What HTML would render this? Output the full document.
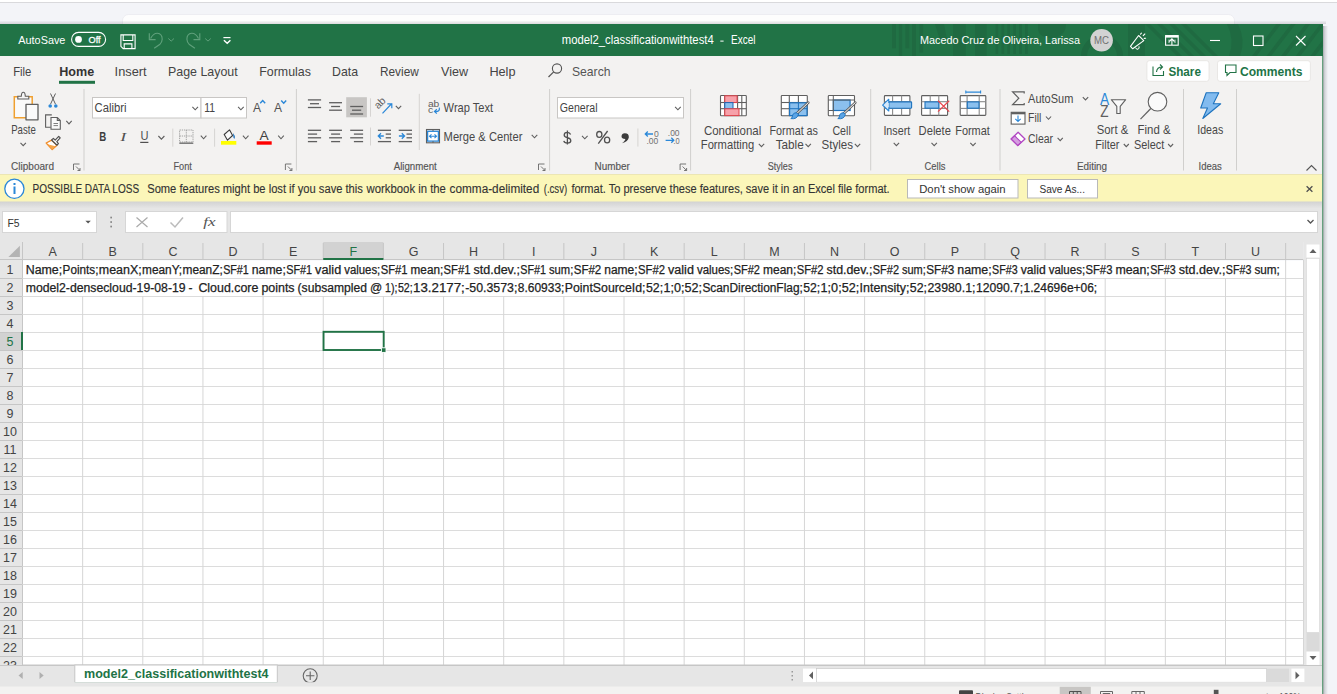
<!DOCTYPE html>
<html><head><meta charset="utf-8"><style>
html,body{margin:0;padding:0;background:#f3f4f8;overflow:hidden}
svg{display:block;font-family:"Liberation Sans", sans-serif}
</style></head><body>
<svg width="1337" height="694" viewBox="0 0 1337 694">
<rect x="0" y="0" width="1337" height="694" fill="#f3f4f8" />
<rect x="0" y="0" width="1337" height="2" fill="#ffffff" />
<rect x="0" y="2" width="1337" height="1" fill="#d9d9dc" />
<rect x="122.5" y="14.5" width="1112" height="20" fill="#fdfdfd" stroke="#e8e8ee" stroke-width="0.7" rx="6" />
<defs><linearGradient id="rsh" x1="0" y1="0" x2="1" y2="0"><stop offset="0" stop-color="#a9abaf"/><stop offset="0.35" stop-color="#d2d3d8"/><stop offset="1" stop-color="#f3f4f8"/></linearGradient></defs>
<rect x="1323" y="26" width="5" height="668" fill="url(#rsh)" />
<defs><linearGradient id="tsh" x1="0" y1="0" x2="0" y2="1"><stop offset="0" stop-color="#000" stop-opacity="0"/><stop offset="1" stop-color="#3a2a40" stop-opacity="0.16"/></linearGradient></defs>
<rect x="0" y="20.5" width="1326" height="3.5" fill="url(#tsh)" />
<rect x="0" y="24" width="1323" height="32" fill="#217346" />
<defs><clipPath id="tb"><rect x="0" y="24" width="1322.5" height="32"/></clipPath></defs>
<g clip-path="url(#tb)" fill="#1f6a41">
<rect x="892" y="24" width="3.9" height="24.299999999999997" fill="#1f6a41" />
<rect x="898.9" y="24" width="3.3" height="32" fill="#1f6a41" />
<rect x="905.4" y="24" width="3.9" height="24.299999999999997" fill="#1f6a41" />
<rect x="912" y="24" width="4" height="32" fill="#1f6a41" />
<rect x="919.5" y="24" width="3.6" height="28.5" fill="#1f6a41" />
<path d="M935 24 H944 L947 40 H940 Z" fill="#1f6a41" />
<rect x="953" y="24" width="12.7" height="32" fill="#1f6a41" />
<rect x="975" y="24" width="11.6" height="32" fill="#1f6a41" />
<rect x="995.6" y="24" width="2.6" height="30" fill="#1f6a41" />
<rect x="1001.5" y="24" width="2.6" height="30" fill="#1f6a41" />
<rect x="1007.4" y="24" width="2.6" height="30" fill="#1f6a41" />
<rect x="1013.3000000000001" y="24" width="2.6" height="30" fill="#1f6a41" />
<rect x="1019.2" y="24" width="2.6" height="30" fill="#1f6a41" />
<rect x="1025.1" y="24" width="2.6" height="30" fill="#1f6a41" />
<path d="M1038 24 H1066 Q1066 36 1052 38 Q1040 38 1038 30 Z" fill="#1f6a41" />
<circle cx="1102" cy="56" r="18" fill="none" stroke="#1f6a41" stroke-width="6"/>
<rect x="1128" y="24" width="17" height="32" fill="#1f6a41" />
<path d="M1145 24 L1150 24 L1182 56 L1177 56 Z" fill="#1f6a41" />
<path d="M1157 24 L1162 24 L1194 56 L1189 56 Z" fill="#1f6a41" />
<path d="M1169 24 L1174 24 L1206 56 L1201 56 Z" fill="#1f6a41" />
<path d="M1181 24 L1186 24 L1218 56 L1213 56 Z" fill="#1f6a41" />
<path d="M1227 24 H1238 Q1246 40 1240 56 H1229 Q1235 40 1227 24 Z" fill="#1f6a41" />
<path d="M1252.0 56 L1276.5 24 L1281.0 24 L1256.5 56 Z" fill="#1f6a41" />
<path d="M1266.6 56 L1291.1 24 L1295.6 24 L1271.1 56 Z" fill="#1f6a41" />
<path d="M1281.2 56 L1305.7 24 L1310.2 24 L1285.7 56 Z" fill="#1f6a41" />
<path d="M1295.8 56 L1320.3 24 L1324.8 24 L1300.3 56 Z" fill="#1f6a41" />
<path d="M1310.4 56 L1334.9 24 L1339.4 24 L1314.9 56 Z" fill="#1f6a41" />
<path d="M1325.0 56 L1349.5 24 L1354.0 24 L1329.5 56 Z" fill="#1f6a41" />
</g>
<rect x="0" y="56" width="1323" height="118" fill="#f3f2f1" />
<rect x="1322" y="56" width="1.2" height="638" fill="#66a07e" />
<text x="18.3" y="44.3" font-size="11.5" fill="#ffffff" font-weight="normal" text-anchor="start" textLength="47.1" lengthAdjust="spacingAndGlyphs" >AutoSave</text>
<rect x="71.6" y="32.4" width="34" height="14" fill="none" stroke="#ffffff" stroke-width="1.1" rx="7" />
<circle cx="78.5" cy="39.4" r="3.4" fill="#ffffff"/>
<text x="88.5" y="43.1" font-size="9.8" fill="#ffffff" font-weight="normal" text-anchor="start" textLength="12.1" lengthAdjust="spacingAndGlyphs" stroke="#ffffff" stroke-width="0.3">Off</text>
<path d="M120.9 34.9 H135.1 V48.6 H123.2 L120.9 46.3 Z M123.2 34.9 V40.5 H132.8 V34.9 M124.2 48.6 V43.9 H131.9 V48.6" fill="none" stroke="#ffffff" stroke-width="1.1" />
<path d="M150.6 38.6 Q153.2 33.2 157.4 33.3 Q162.2 33.8 162.2 39.2 Q162 42.2 160 44.2 L154.2 48.2" fill="none" stroke="#5fa07b" stroke-width="1.15" />
<path d="M149.3 33.3 V39.6 H155.6" fill="none" stroke="#5fa07b" stroke-width="1.15" />
<path d="M168.3 38.5 L171.2 41.1 L174 38.5" fill="none" stroke="#5fa07b" stroke-width="1" />
<path d="M198.5 38.6 Q195.9 33.2 191.7 33.3 Q186.9 33.8 186.9 39.2 Q187.1 42.2 189.1 44.2 L194.9 48.2" fill="none" stroke="#5fa07b" stroke-width="1.15" />
<path d="M199.8 33.3 V39.6 H193.5" fill="none" stroke="#5fa07b" stroke-width="1.15" />
<path d="M205.2 38.5 L208 41.1 L210.8 38.5" fill="none" stroke="#5fa07b" stroke-width="1" />
<path d="M223.4 37.6 H230.5" fill="none" stroke="#ffffff" stroke-width="1.2" />
<path d="M223.9 40.2 L227.2 43.2 L230.4 40.2" fill="none" stroke="#ffffff" stroke-width="1.5" />
<text x="561.8" y="44.3" font-size="12" fill="#ffffff" font-weight="normal" text-anchor="start" textLength="151.9" lengthAdjust="spacingAndGlyphs" >model2_classificationwithtest4</text>
<rect x="720.3" y="40.6" width="3.3" height="1" fill="#ffffff" />
<text x="731.0" y="44.3" font-size="12" fill="#ffffff" font-weight="normal" text-anchor="start" textLength="24.4" lengthAdjust="spacingAndGlyphs" >Excel</text>
<text x="920.0" y="44.3" font-size="11.5" fill="#ffffff" font-weight="normal" text-anchor="start" textLength="160.0" lengthAdjust="spacingAndGlyphs" >Macedo Cruz de Oliveira, Larissa</text>
<circle cx="1101.6" cy="40.2" r="11.3" fill="#d3d3d3"/>
<text x="1101.6" y="44.0" font-size="10" fill="#707070" font-weight="normal" text-anchor="middle" textLength="15.0" lengthAdjust="spacingAndGlyphs" >MC</text>
<path d="M1130.5 46.3 L1138.6 35.5 L1143.8 40.6 L1132.7 48.8 Z" fill="none" stroke="#ffffff" stroke-width="1.1" stroke-linejoin="round"/>
<path d="M1135.6 47.6 Q1136.2 49.8 1138.2 49.2 Q1139.6 48.3 1139 46.3" fill="none" stroke="#ffffff" stroke-width="1" />
<path d="M1140.6 34.2 L1141.4 33.2 M1143.2 35.6 L1144.8 34 M1144.2 38.4 L1145.6 38.2" fill="none" stroke="#ffffff" stroke-width="1.1" stroke-linecap="round"/>
<rect x="1165.6" y="35.6" width="12.6" height="9.6" fill="none" stroke="#ffffff" stroke-width="1.1" />
<rect x="1165.6" y="35.6" width="12.6" height="2" fill="#ffffff" />
<path d="M1169 43 V39.5 M1175 43 V39.5" fill="none" stroke="#ffffff" stroke-width="0.8" />
<path d="M1169.3 41.5 L1171.9 38.8 L1174.5 41.5 M1171.9 39 V45" fill="none" stroke="#ffffff" stroke-width="1.1" />
<line x1="1210" y1="40.5" x2="1220" y2="40.5" stroke="#ffffff" stroke-width="1.1" />
<rect x="1253.5" y="36" width="9.5" height="9.5" fill="none" stroke="#ffffff" stroke-width="1.1" />
<path d="M1296 36 L1305.5 45.5 M1305.5 36 L1296 45.5" fill="none" stroke="#ffffff" stroke-width="1.1" />
<text x="13.2" y="76.0" font-size="12.8" fill="#444444" font-weight="normal" text-anchor="start" textLength="18.2" lengthAdjust="spacingAndGlyphs" >File</text>
<text x="59.3" y="76.0" font-size="12.8" fill="#333333" font-weight="bold" text-anchor="start" textLength="34.9" lengthAdjust="spacingAndGlyphs" >Home</text>
<text x="114.6" y="76.0" font-size="12.8" fill="#444444" font-weight="normal" text-anchor="start" textLength="32.0" lengthAdjust="spacingAndGlyphs" >Insert</text>
<text x="168.0" y="76.0" font-size="12.8" fill="#444444" font-weight="normal" text-anchor="start" textLength="69.7" lengthAdjust="spacingAndGlyphs" >Page Layout</text>
<text x="259.3" y="76.0" font-size="12.8" fill="#444444" font-weight="normal" text-anchor="start" textLength="51.6" lengthAdjust="spacingAndGlyphs" >Formulas</text>
<text x="332.0" y="76.0" font-size="12.8" fill="#444444" font-weight="normal" text-anchor="start" textLength="26.0" lengthAdjust="spacingAndGlyphs" >Data</text>
<text x="380.0" y="76.0" font-size="12.8" fill="#444444" font-weight="normal" text-anchor="start" textLength="38.8" lengthAdjust="spacingAndGlyphs" >Review</text>
<text x="441.0" y="76.0" font-size="12.8" fill="#444444" font-weight="normal" text-anchor="start" textLength="27.0" lengthAdjust="spacingAndGlyphs" >View</text>
<text x="489.4" y="76.0" font-size="12.8" fill="#444444" font-weight="normal" text-anchor="start" textLength="26.1" lengthAdjust="spacingAndGlyphs" >Help</text>
<rect x="59" y="80.8" width="36" height="3" fill="#217346" />
<circle cx="557" cy="68.5" r="4.6" fill="none" stroke="#555" stroke-width="1.1"/>
<line x1="553.7" y1="71.8" x2="548.5" y2="77" stroke="#555" stroke-width="1.2" />
<text x="572.0" y="76.0" font-size="12.8" fill="#555555" font-weight="normal" text-anchor="start" textLength="38.5" lengthAdjust="spacingAndGlyphs" >Search</text>
<rect x="1146.9" y="60.7" width="62.1" height="20.6" fill="#ffffff" stroke="#e4e2e0" stroke-width="0.8" rx="2.5" />
<rect x="1217.5" y="60.7" width="92.9" height="20.6" fill="#ffffff" stroke="#e4e2e0" stroke-width="0.8" rx="2.5" />
<path d="M1153 66.5 V75.5 H1163.5 V71 M1156.5 72 Q1157 67 1162 67 M1160 64.5 L1162.5 67 L1160 69.5" fill="none" stroke="#217346" stroke-width="1.1" />
<text x="1168.4" y="75.7" font-size="12.8" fill="#217346" font-weight="bold" text-anchor="start" textLength="32.5" lengthAdjust="spacingAndGlyphs" >Share</text>
<path d="M1225.5 65 H1236 V72.5 H1230 L1227 75.5 V72.5 H1225.5 Z" fill="none" stroke="#217346" stroke-width="1.1" />
<text x="1240.0" y="75.7" font-size="12.8" fill="#217346" font-weight="bold" text-anchor="start" textLength="62.5" lengthAdjust="spacingAndGlyphs" >Comments</text>
<line x1="84" y1="89" x2="84" y2="170.5" stroke="#d0cfcd" stroke-width="1" />
<line x1="296.4" y1="89" x2="296.4" y2="170.5" stroke="#d0cfcd" stroke-width="1" />
<line x1="549.6" y1="89" x2="549.6" y2="170.5" stroke="#d0cfcd" stroke-width="1" />
<line x1="690.6" y1="89" x2="690.6" y2="170.5" stroke="#d0cfcd" stroke-width="1" />
<line x1="870.7" y1="89" x2="870.7" y2="170.5" stroke="#d0cfcd" stroke-width="1" />
<line x1="1000" y1="89" x2="1000" y2="170.5" stroke="#d0cfcd" stroke-width="1" />
<line x1="1183.5" y1="89" x2="1183.5" y2="170.5" stroke="#d0cfcd" stroke-width="1" />
<line x1="1236.5" y1="89" x2="1236.5" y2="170.5" stroke="#d0cfcd" stroke-width="1" />
<text x="11.0" y="170.3" font-size="10" fill="#555555" font-weight="normal" text-anchor="start" textLength="43.0" lengthAdjust="spacingAndGlyphs" stroke="#555555" stroke-width="0.15">Clipboard</text>
<text x="173.5" y="170.3" font-size="10" fill="#555555" font-weight="normal" text-anchor="start" textLength="18.4" lengthAdjust="spacingAndGlyphs" stroke="#555555" stroke-width="0.15">Font</text>
<text x="393.7" y="170.3" font-size="10" fill="#555555" font-weight="normal" text-anchor="start" textLength="43.1" lengthAdjust="spacingAndGlyphs" stroke="#555555" stroke-width="0.15">Alignment</text>
<text x="594.5" y="170.3" font-size="10" fill="#555555" font-weight="normal" text-anchor="start" textLength="35.2" lengthAdjust="spacingAndGlyphs" stroke="#555555" stroke-width="0.15">Number</text>
<text x="767.8" y="170.3" font-size="10" fill="#555555" font-weight="normal" text-anchor="start" textLength="24.6" lengthAdjust="spacingAndGlyphs" stroke="#555555" stroke-width="0.15">Styles</text>
<text x="924.6" y="170.3" font-size="10" fill="#555555" font-weight="normal" text-anchor="start" textLength="20.8" lengthAdjust="spacingAndGlyphs" stroke="#555555" stroke-width="0.15">Cells</text>
<text x="1076.9" y="170.3" font-size="10" fill="#555555" font-weight="normal" text-anchor="start" textLength="30.2" lengthAdjust="spacingAndGlyphs" stroke="#555555" stroke-width="0.15">Editing</text>
<text x="1198.6" y="170.3" font-size="10" fill="#555555" font-weight="normal" text-anchor="start" textLength="23.2" lengthAdjust="spacingAndGlyphs" stroke="#555555" stroke-width="0.15">Ideas</text>
<path d="M73.5 170 V164 H79.5 M76 166.5 L80 170.5 M77.5 170.5 H80 V168" fill="none" stroke="#666" stroke-width="0.9" />
<path d="M285.4 170 V164 H291.4 M287.9 166.5 L291.9 170.5 M289.4 170.5 H291.9 V168" fill="none" stroke="#666" stroke-width="0.9" />
<path d="M538.5 170 V164 H544.5 M541 166.5 L545 170.5 M542.5 170.5 H545 V168" fill="none" stroke="#666" stroke-width="0.9" />
<path d="M680.1 170 V164 H686.1 M682.6 166.5 L686.6 170.5 M684.1 170.5 H686.6 V168" fill="none" stroke="#666" stroke-width="0.9" />
<path d="M1306.5 170.5 L1311.5 165.5 L1316.5 170.5" fill="none" stroke="#555" stroke-width="1.1" />
<rect x="0" y="174" width="1322" height="28" fill="#fbf6b9" />
<rect x="0" y="174" width="1322" height="0.8" fill="#e9e3b3" />
<circle cx="14.4" cy="188.8" r="9.6" fill="#ffffff" stroke="#2b88d8" stroke-width="1.3"/>
<rect x="13.5" y="186.5" width="2" height="7.5" fill="#2b88d8" />
<rect x="13.5" y="183" width="2" height="2" fill="#2b88d8" />
<text x="32.5" y="193.0" font-size="12" fill="#333333" font-weight="normal" text-anchor="start" textLength="106.6" lengthAdjust="spacingAndGlyphs" stroke="#333333" stroke-width="0.15">POSSIBLE DATA LOSS</text>
<text x="147.2" y="193.2" font-size="12" fill="#333333" font-weight="normal" text-anchor="start" textLength="215.7" lengthAdjust="spacingAndGlyphs" stroke="#333333" stroke-width="0.12">Some features might be lost if you save this</text>
<text x="366.6" y="193.2" font-size="12" fill="#333333" font-weight="normal" text-anchor="start" textLength="79.3" lengthAdjust="spacingAndGlyphs" stroke="#333333" stroke-width="0.12">workbook in the</text>
<text x="449.6" y="193.2" font-size="12" fill="#333333" font-weight="normal" text-anchor="start" textLength="89.6" lengthAdjust="spacingAndGlyphs" stroke="#333333" stroke-width="0.12">comma-delimited</text>
<text x="543.7" y="193.2" font-size="12" fill="#333333" font-weight="normal" text-anchor="start" textLength="23.5" lengthAdjust="spacingAndGlyphs" stroke="#333333" stroke-width="0.12">(.csv)</text>
<text x="571.4" y="193.2" font-size="12" fill="#333333" font-weight="normal" text-anchor="start" textLength="318.3" lengthAdjust="spacingAndGlyphs" stroke="#333333" stroke-width="0.12">format. To preserve these features, save it in an Excel file format.</text>
<rect x="907.5" y="179.5" width="110.5" height="18.5" fill="#ffffff" stroke="#b9b9b9" stroke-width="1" />
<text x="919.2" y="193.0" font-size="11.5" fill="#333333" font-weight="normal" text-anchor="start" textLength="86.4" lengthAdjust="spacingAndGlyphs" >Don't show again</text>
<rect x="1027.5" y="179.5" width="70" height="18.5" fill="#ffffff" stroke="#b9b9b9" stroke-width="1" />
<text x="1039.4" y="193.0" font-size="11.5" fill="#333333" font-weight="normal" text-anchor="start" textLength="45.6" lengthAdjust="spacingAndGlyphs" >Save As...</text>
<path d="M1306.6 186.2 L1312.4 191.8 M1312.4 186.2 L1306.6 191.8" fill="none" stroke="#505050" stroke-width="1.3" />
<rect x="0" y="202" width="1322" height="40" fill="#e6e6e6" />
<defs><linearGradient id="shd" x1="0" y1="0" x2="0" y2="1"><stop offset="0" stop-color="#d2d2d2"/><stop offset="1" stop-color="#e6e6e6"/></linearGradient></defs>
<rect x="0" y="201.5" width="1322" height="7" fill="url(#shd)" />
<rect x="2.5" y="211.5" width="94" height="21" fill="#ffffff" stroke="#d6d6d6" stroke-width="1" />
<text x="7.4" y="226.5" font-size="11.5" fill="#333333" font-weight="normal" text-anchor="start" textLength="12.1" lengthAdjust="spacingAndGlyphs" >F5</text>
<path d="M85.4 220.7 H90.8 L88.1 223.5 Z" fill="#555" />
<rect x="110.3" y="216.7" width="1.7" height="1.7" fill="#888" />
<rect x="110.3" y="221.2" width="1.7" height="1.7" fill="#888" />
<rect x="110.3" y="225.7" width="1.7" height="1.7" fill="#888" />
<rect x="125.5" y="211.5" width="101.5" height="21" fill="#ffffff" stroke="#d6d6d6" stroke-width="1" />
<path d="M136.5 217.5 L147.5 227 M147.5 217.5 L136.5 227" fill="none" stroke="#aaaaaa" stroke-width="1.2" />
<path d="M170.5 222.5 L175 227 L183 217.5" fill="none" stroke="#bbbbbb" stroke-width="1.5" />
<text x="203.3" y="226.3" font-size="13.5" fill="#555555" font-weight="normal" text-anchor="start" textLength="12.3" lengthAdjust="spacingAndGlyphs" font-family="Liberation Serif" font-style="italic">fx</text>
<rect x="230.5" y="211.5" width="1087" height="21" fill="#ffffff" stroke="#d6d6d6" stroke-width="1" />
<path d="M1307.5 220 L1310.5 223 L1313.5 220" fill="none" stroke="#555" stroke-width="1.3" />
<rect x="0" y="242" width="1303.5" height="18" fill="#e6e6e6" />
<rect x="0" y="260" width="22.5" height="405" fill="#e6e6e6" />
<rect x="23.0" y="260.5" width="1280.5" height="404.5" fill="#ffffff" />
<rect x="323.25" y="242" width="60.15" height="18" fill="#d2d2d2" />
<rect x="0" y="332" width="22.5" height="18" fill="#d2d2d2" />
<path d="M8.4 257 H19.9 V245.7 Z" fill="#b4b4b4" />
<line x1="22.5" y1="243" x2="22.5" y2="260" stroke="#c6c6c6" stroke-width="1" />
<line x1="82.65" y1="243" x2="82.65" y2="260" stroke="#c6c6c6" stroke-width="1" />
<line x1="142.8" y1="243" x2="142.8" y2="260" stroke="#c6c6c6" stroke-width="1" />
<line x1="202.95" y1="243" x2="202.95" y2="260" stroke="#c6c6c6" stroke-width="1" />
<line x1="263.1" y1="243" x2="263.1" y2="260" stroke="#c6c6c6" stroke-width="1" />
<line x1="323.25" y1="243" x2="323.25" y2="260" stroke="#c6c6c6" stroke-width="1" />
<line x1="383.4" y1="243" x2="383.4" y2="260" stroke="#c6c6c6" stroke-width="1" />
<line x1="443.55" y1="243" x2="443.55" y2="260" stroke="#c6c6c6" stroke-width="1" />
<line x1="503.7" y1="243" x2="503.7" y2="260" stroke="#c6c6c6" stroke-width="1" />
<line x1="563.85" y1="243" x2="563.85" y2="260" stroke="#c6c6c6" stroke-width="1" />
<line x1="624.0" y1="243" x2="624.0" y2="260" stroke="#c6c6c6" stroke-width="1" />
<line x1="684.15" y1="243" x2="684.15" y2="260" stroke="#c6c6c6" stroke-width="1" />
<line x1="744.3" y1="243" x2="744.3" y2="260" stroke="#c6c6c6" stroke-width="1" />
<line x1="804.4499999999999" y1="243" x2="804.4499999999999" y2="260" stroke="#c6c6c6" stroke-width="1" />
<line x1="864.6" y1="243" x2="864.6" y2="260" stroke="#c6c6c6" stroke-width="1" />
<line x1="924.75" y1="243" x2="924.75" y2="260" stroke="#c6c6c6" stroke-width="1" />
<line x1="984.9" y1="243" x2="984.9" y2="260" stroke="#c6c6c6" stroke-width="1" />
<line x1="1045.05" y1="243" x2="1045.05" y2="260" stroke="#c6c6c6" stroke-width="1" />
<line x1="1105.2" y1="243" x2="1105.2" y2="260" stroke="#c6c6c6" stroke-width="1" />
<line x1="1165.35" y1="243" x2="1165.35" y2="260" stroke="#c6c6c6" stroke-width="1" />
<line x1="1225.5" y1="243" x2="1225.5" y2="260" stroke="#c6c6c6" stroke-width="1" />
<line x1="1285.6499999999999" y1="243" x2="1285.6499999999999" y2="260" stroke="#c6c6c6" stroke-width="1" />
<line x1="0" y1="259.5" x2="1303.5" y2="259.5" stroke="#c6c6c6" stroke-width="1" />
<line x1="22.5" y1="242" x2="22.5" y2="665" stroke="#c6c6c6" stroke-width="1" />
<line x1="0" y1="278.5" x2="22.5" y2="278.5" stroke="#c6c6c6" stroke-width="1" />
<line x1="0" y1="296.5" x2="22.5" y2="296.5" stroke="#c6c6c6" stroke-width="1" />
<line x1="0" y1="314.5" x2="22.5" y2="314.5" stroke="#c6c6c6" stroke-width="1" />
<line x1="0" y1="332.5" x2="22.5" y2="332.5" stroke="#c6c6c6" stroke-width="1" />
<line x1="0" y1="350.5" x2="22.5" y2="350.5" stroke="#c6c6c6" stroke-width="1" />
<line x1="0" y1="368.5" x2="22.5" y2="368.5" stroke="#c6c6c6" stroke-width="1" />
<line x1="0" y1="386.5" x2="22.5" y2="386.5" stroke="#c6c6c6" stroke-width="1" />
<line x1="0" y1="404.5" x2="22.5" y2="404.5" stroke="#c6c6c6" stroke-width="1" />
<line x1="0" y1="422.5" x2="22.5" y2="422.5" stroke="#c6c6c6" stroke-width="1" />
<line x1="0" y1="440.5" x2="22.5" y2="440.5" stroke="#c6c6c6" stroke-width="1" />
<line x1="0" y1="458.5" x2="22.5" y2="458.5" stroke="#c6c6c6" stroke-width="1" />
<line x1="0" y1="476.5" x2="22.5" y2="476.5" stroke="#c6c6c6" stroke-width="1" />
<line x1="0" y1="494.5" x2="22.5" y2="494.5" stroke="#c6c6c6" stroke-width="1" />
<line x1="0" y1="512.5" x2="22.5" y2="512.5" stroke="#c6c6c6" stroke-width="1" />
<line x1="0" y1="530.5" x2="22.5" y2="530.5" stroke="#c6c6c6" stroke-width="1" />
<line x1="0" y1="548.5" x2="22.5" y2="548.5" stroke="#c6c6c6" stroke-width="1" />
<line x1="0" y1="566.5" x2="22.5" y2="566.5" stroke="#c6c6c6" stroke-width="1" />
<line x1="0" y1="584.5" x2="22.5" y2="584.5" stroke="#c6c6c6" stroke-width="1" />
<line x1="0" y1="602.5" x2="22.5" y2="602.5" stroke="#c6c6c6" stroke-width="1" />
<line x1="0" y1="620.5" x2="22.5" y2="620.5" stroke="#c6c6c6" stroke-width="1" />
<line x1="0" y1="638.5" x2="22.5" y2="638.5" stroke="#c6c6c6" stroke-width="1" />
<line x1="0" y1="656.5" x2="22.5" y2="656.5" stroke="#c6c6c6" stroke-width="1" />
<line x1="0" y1="674.5" x2="22.5" y2="674.5" stroke="#c6c6c6" stroke-width="1" />
<line x1="22.5" y1="278.5" x2="1303.5" y2="278.5" stroke="#dcdcdc" stroke-width="1" />
<line x1="22.5" y1="296.5" x2="1303.5" y2="296.5" stroke="#dcdcdc" stroke-width="1" />
<line x1="22.5" y1="314.5" x2="1303.5" y2="314.5" stroke="#dcdcdc" stroke-width="1" />
<line x1="22.5" y1="332.5" x2="1303.5" y2="332.5" stroke="#dcdcdc" stroke-width="1" />
<line x1="22.5" y1="350.5" x2="1303.5" y2="350.5" stroke="#dcdcdc" stroke-width="1" />
<line x1="22.5" y1="368.5" x2="1303.5" y2="368.5" stroke="#dcdcdc" stroke-width="1" />
<line x1="22.5" y1="386.5" x2="1303.5" y2="386.5" stroke="#dcdcdc" stroke-width="1" />
<line x1="22.5" y1="404.5" x2="1303.5" y2="404.5" stroke="#dcdcdc" stroke-width="1" />
<line x1="22.5" y1="422.5" x2="1303.5" y2="422.5" stroke="#dcdcdc" stroke-width="1" />
<line x1="22.5" y1="440.5" x2="1303.5" y2="440.5" stroke="#dcdcdc" stroke-width="1" />
<line x1="22.5" y1="458.5" x2="1303.5" y2="458.5" stroke="#dcdcdc" stroke-width="1" />
<line x1="22.5" y1="476.5" x2="1303.5" y2="476.5" stroke="#dcdcdc" stroke-width="1" />
<line x1="22.5" y1="494.5" x2="1303.5" y2="494.5" stroke="#dcdcdc" stroke-width="1" />
<line x1="22.5" y1="512.5" x2="1303.5" y2="512.5" stroke="#dcdcdc" stroke-width="1" />
<line x1="22.5" y1="530.5" x2="1303.5" y2="530.5" stroke="#dcdcdc" stroke-width="1" />
<line x1="22.5" y1="548.5" x2="1303.5" y2="548.5" stroke="#dcdcdc" stroke-width="1" />
<line x1="22.5" y1="566.5" x2="1303.5" y2="566.5" stroke="#dcdcdc" stroke-width="1" />
<line x1="22.5" y1="584.5" x2="1303.5" y2="584.5" stroke="#dcdcdc" stroke-width="1" />
<line x1="22.5" y1="602.5" x2="1303.5" y2="602.5" stroke="#dcdcdc" stroke-width="1" />
<line x1="22.5" y1="620.5" x2="1303.5" y2="620.5" stroke="#dcdcdc" stroke-width="1" />
<line x1="22.5" y1="638.5" x2="1303.5" y2="638.5" stroke="#dcdcdc" stroke-width="1" />
<line x1="22.5" y1="656.5" x2="1303.5" y2="656.5" stroke="#dcdcdc" stroke-width="1" />
<line x1="82.65" y1="296" x2="82.65" y2="665" stroke="#d6d6d6" stroke-width="1" />
<line x1="142.8" y1="296" x2="142.8" y2="665" stroke="#d6d6d6" stroke-width="1" />
<line x1="202.95" y1="296" x2="202.95" y2="665" stroke="#d6d6d6" stroke-width="1" />
<line x1="263.1" y1="296" x2="263.1" y2="665" stroke="#d6d6d6" stroke-width="1" />
<line x1="323.25" y1="296" x2="323.25" y2="665" stroke="#d6d6d6" stroke-width="1" />
<line x1="383.4" y1="296" x2="383.4" y2="665" stroke="#d6d6d6" stroke-width="1" />
<line x1="443.55" y1="296" x2="443.55" y2="665" stroke="#d6d6d6" stroke-width="1" />
<line x1="503.7" y1="296" x2="503.7" y2="665" stroke="#d6d6d6" stroke-width="1" />
<line x1="563.85" y1="296" x2="563.85" y2="665" stroke="#d6d6d6" stroke-width="1" />
<line x1="624.0" y1="296" x2="624.0" y2="665" stroke="#d6d6d6" stroke-width="1" />
<line x1="684.15" y1="296" x2="684.15" y2="665" stroke="#d6d6d6" stroke-width="1" />
<line x1="744.3" y1="296" x2="744.3" y2="665" stroke="#d6d6d6" stroke-width="1" />
<line x1="804.4499999999999" y1="296" x2="804.4499999999999" y2="665" stroke="#d6d6d6" stroke-width="1" />
<line x1="864.6" y1="296" x2="864.6" y2="665" stroke="#d6d6d6" stroke-width="1" />
<line x1="924.75" y1="296" x2="924.75" y2="665" stroke="#d6d6d6" stroke-width="1" />
<line x1="984.9" y1="296" x2="984.9" y2="665" stroke="#d6d6d6" stroke-width="1" />
<line x1="1045.05" y1="296" x2="1045.05" y2="665" stroke="#d6d6d6" stroke-width="1" />
<line x1="1105.2" y1="278" x2="1105.2" y2="665" stroke="#d6d6d6" stroke-width="1" />
<line x1="1165.35" y1="278" x2="1165.35" y2="665" stroke="#d6d6d6" stroke-width="1" />
<line x1="1225.5" y1="278" x2="1225.5" y2="665" stroke="#d6d6d6" stroke-width="1" />
<line x1="1285.6499999999999" y1="260" x2="1285.6499999999999" y2="665" stroke="#d6d6d6" stroke-width="1" />
<rect x="323.25" y="258" width="60.15" height="2" fill="#217346" />
<rect x="21.0" y="332" width="2" height="18" fill="#217346" />
<text x="52.6" y="256.0" font-size="12.5" fill="#444444" font-weight="normal" text-anchor="middle" >A</text>
<text x="112.7" y="256.0" font-size="12.5" fill="#444444" font-weight="normal" text-anchor="middle" >B</text>
<text x="172.9" y="256.0" font-size="12.5" fill="#444444" font-weight="normal" text-anchor="middle" >C</text>
<text x="233.0" y="256.0" font-size="12.5" fill="#444444" font-weight="normal" text-anchor="middle" >D</text>
<text x="293.2" y="256.0" font-size="12.5" fill="#444444" font-weight="normal" text-anchor="middle" >E</text>
<text x="353.3" y="256.0" font-size="12.5" fill="#217346" font-weight="normal" text-anchor="middle" >F</text>
<text x="413.5" y="256.0" font-size="12.5" fill="#444444" font-weight="normal" text-anchor="middle" >G</text>
<text x="473.6" y="256.0" font-size="12.5" fill="#444444" font-weight="normal" text-anchor="middle" >H</text>
<text x="533.8" y="256.0" font-size="12.5" fill="#444444" font-weight="normal" text-anchor="middle" >I</text>
<text x="593.9" y="256.0" font-size="12.5" fill="#444444" font-weight="normal" text-anchor="middle" >J</text>
<text x="654.1" y="256.0" font-size="12.5" fill="#444444" font-weight="normal" text-anchor="middle" >K</text>
<text x="714.2" y="256.0" font-size="12.5" fill="#444444" font-weight="normal" text-anchor="middle" >L</text>
<text x="774.4" y="256.0" font-size="12.5" fill="#444444" font-weight="normal" text-anchor="middle" >M</text>
<text x="834.5" y="256.0" font-size="12.5" fill="#444444" font-weight="normal" text-anchor="middle" >N</text>
<text x="894.7" y="256.0" font-size="12.5" fill="#444444" font-weight="normal" text-anchor="middle" >O</text>
<text x="954.8" y="256.0" font-size="12.5" fill="#444444" font-weight="normal" text-anchor="middle" >P</text>
<text x="1015.0" y="256.0" font-size="12.5" fill="#444444" font-weight="normal" text-anchor="middle" >Q</text>
<text x="1075.1" y="256.0" font-size="12.5" fill="#444444" font-weight="normal" text-anchor="middle" >R</text>
<text x="1135.3" y="256.0" font-size="12.5" fill="#444444" font-weight="normal" text-anchor="middle" >S</text>
<text x="1195.4" y="256.0" font-size="12.5" fill="#444444" font-weight="normal" text-anchor="middle" >T</text>
<text x="1255.6" y="256.0" font-size="12.5" fill="#444444" font-weight="normal" text-anchor="middle" >U</text>
<text x="10.0" y="274.0" font-size="12.5" fill="#444444" font-weight="normal" text-anchor="middle" >1</text>
<text x="10.0" y="292.0" font-size="12.5" fill="#444444" font-weight="normal" text-anchor="middle" >2</text>
<text x="10.0" y="310.0" font-size="12.5" fill="#444444" font-weight="normal" text-anchor="middle" >3</text>
<text x="10.0" y="328.0" font-size="12.5" fill="#444444" font-weight="normal" text-anchor="middle" >4</text>
<text x="10.0" y="346.0" font-size="12.5" fill="#217346" font-weight="normal" text-anchor="middle" >5</text>
<text x="10.0" y="364.0" font-size="12.5" fill="#444444" font-weight="normal" text-anchor="middle" >6</text>
<text x="10.0" y="382.0" font-size="12.5" fill="#444444" font-weight="normal" text-anchor="middle" >7</text>
<text x="10.0" y="400.0" font-size="12.5" fill="#444444" font-weight="normal" text-anchor="middle" >8</text>
<text x="10.0" y="418.0" font-size="12.5" fill="#444444" font-weight="normal" text-anchor="middle" >9</text>
<text x="10.0" y="436.0" font-size="12.5" fill="#444444" font-weight="normal" text-anchor="middle" >10</text>
<text x="10.0" y="454.0" font-size="12.5" fill="#444444" font-weight="normal" text-anchor="middle" >11</text>
<text x="10.0" y="472.0" font-size="12.5" fill="#444444" font-weight="normal" text-anchor="middle" >12</text>
<text x="10.0" y="490.0" font-size="12.5" fill="#444444" font-weight="normal" text-anchor="middle" >13</text>
<text x="10.0" y="508.0" font-size="12.5" fill="#444444" font-weight="normal" text-anchor="middle" >14</text>
<text x="10.0" y="526.0" font-size="12.5" fill="#444444" font-weight="normal" text-anchor="middle" >15</text>
<text x="10.0" y="544.0" font-size="12.5" fill="#444444" font-weight="normal" text-anchor="middle" >16</text>
<text x="10.0" y="562.0" font-size="12.5" fill="#444444" font-weight="normal" text-anchor="middle" >17</text>
<text x="10.0" y="580.0" font-size="12.5" fill="#444444" font-weight="normal" text-anchor="middle" >18</text>
<text x="10.0" y="598.0" font-size="12.5" fill="#444444" font-weight="normal" text-anchor="middle" >19</text>
<text x="10.0" y="616.0" font-size="12.5" fill="#444444" font-weight="normal" text-anchor="middle" >20</text>
<text x="10.0" y="634.0" font-size="12.5" fill="#444444" font-weight="normal" text-anchor="middle" >21</text>
<text x="10.0" y="652.0" font-size="12.5" fill="#444444" font-weight="normal" text-anchor="middle" >22</text>
<text x="10.0" y="670.0" font-size="12.5" fill="#444444" font-weight="normal" text-anchor="middle" >23</text>
<text x="25.7" y="274.0" font-size="12.3" fill="#222222" font-weight="normal" text-anchor="start" textLength="36.5" lengthAdjust="spacingAndGlyphs" stroke="#222222" stroke-width="0.25">Name;</text>
<text x="62.6" y="274.0" font-size="12.3" fill="#222222" font-weight="normal" text-anchor="start" textLength="35.8" lengthAdjust="spacingAndGlyphs" stroke="#222222" stroke-width="0.25">Points;</text>
<text x="98.8" y="274.0" font-size="12.3" fill="#222222" font-weight="normal" text-anchor="start" textLength="42.9" lengthAdjust="spacingAndGlyphs" stroke="#222222" stroke-width="0.25">meanX;</text>
<text x="142.1" y="274.0" font-size="12.3" fill="#222222" font-weight="normal" text-anchor="start" textLength="40.0" lengthAdjust="spacingAndGlyphs" stroke="#222222" stroke-width="0.25">meanY;</text>
<text x="182.5" y="274.0" font-size="12.3" fill="#222222" font-weight="normal" text-anchor="start" textLength="40.3" lengthAdjust="spacingAndGlyphs" stroke="#222222" stroke-width="0.25">meanZ;</text>
<text x="223.2" y="274.0" font-size="12.3" fill="#222222" font-weight="normal" text-anchor="start" textLength="25.6" lengthAdjust="spacingAndGlyphs" stroke="#222222" stroke-width="0.25">SF#1</text>
<text x="251.8" y="274.0" font-size="12.3" fill="#222222" font-weight="normal" text-anchor="start" textLength="34.0" lengthAdjust="spacingAndGlyphs" stroke="#222222" stroke-width="0.25">name;</text>
<text x="286.2" y="274.0" font-size="12.3" fill="#222222" font-weight="normal" text-anchor="start" textLength="25.9" lengthAdjust="spacingAndGlyphs" stroke="#222222" stroke-width="0.25">SF#1</text>
<text x="315.1" y="274.0" font-size="12.3" fill="#222222" font-weight="normal" text-anchor="start" textLength="26.1" lengthAdjust="spacingAndGlyphs" stroke="#222222" stroke-width="0.25">valid</text>
<text x="344.2" y="274.0" font-size="12.3" fill="#222222" font-weight="normal" text-anchor="start" textLength="36.1" lengthAdjust="spacingAndGlyphs" stroke="#222222" stroke-width="0.25">values;</text>
<text x="380.7" y="274.0" font-size="12.3" fill="#222222" font-weight="normal" text-anchor="start" textLength="26.9" lengthAdjust="spacingAndGlyphs" stroke="#222222" stroke-width="0.25">SF#1</text>
<text x="410.6" y="274.0" font-size="12.3" fill="#222222" font-weight="normal" text-anchor="start" textLength="32.6" lengthAdjust="spacingAndGlyphs" stroke="#222222" stroke-width="0.25">mean;</text>
<text x="443.6" y="274.0" font-size="12.3" fill="#222222" font-weight="normal" text-anchor="start" textLength="26.9" lengthAdjust="spacingAndGlyphs" stroke="#222222" stroke-width="0.25">SF#1</text>
<text x="473.5" y="274.0" font-size="12.3" fill="#222222" font-weight="normal" text-anchor="start" textLength="46.4" lengthAdjust="spacingAndGlyphs" stroke="#222222" stroke-width="0.25">std.dev.;</text>
<text x="520.3" y="274.0" font-size="12.3" fill="#222222" font-weight="normal" text-anchor="start" textLength="25.7" lengthAdjust="spacingAndGlyphs" stroke="#222222" stroke-width="0.25">SF#1</text>
<text x="549.0" y="274.0" font-size="12.3" fill="#222222" font-weight="normal" text-anchor="start" textLength="24.3" lengthAdjust="spacingAndGlyphs" stroke="#222222" stroke-width="0.25">sum;</text>
<text x="573.7" y="274.0" font-size="12.3" fill="#222222" font-weight="normal" text-anchor="start" textLength="27.6" lengthAdjust="spacingAndGlyphs" stroke="#222222" stroke-width="0.25">SF#2</text>
<text x="604.3" y="274.0" font-size="12.3" fill="#222222" font-weight="normal" text-anchor="start" textLength="33.3" lengthAdjust="spacingAndGlyphs" stroke="#222222" stroke-width="0.25">name;</text>
<text x="638.0" y="274.0" font-size="12.3" fill="#222222" font-weight="normal" text-anchor="start" textLength="27.0" lengthAdjust="spacingAndGlyphs" stroke="#222222" stroke-width="0.25">SF#2</text>
<text x="668.0" y="274.0" font-size="12.3" fill="#222222" font-weight="normal" text-anchor="start" textLength="25.9" lengthAdjust="spacingAndGlyphs" stroke="#222222" stroke-width="0.25">valid</text>
<text x="696.9" y="274.0" font-size="12.3" fill="#222222" font-weight="normal" text-anchor="start" textLength="36.4" lengthAdjust="spacingAndGlyphs" stroke="#222222" stroke-width="0.25">values;</text>
<text x="733.7" y="274.0" font-size="12.3" fill="#222222" font-weight="normal" text-anchor="start" textLength="26.3" lengthAdjust="spacingAndGlyphs" stroke="#222222" stroke-width="0.25">SF#2</text>
<text x="763.0" y="274.0" font-size="12.3" fill="#222222" font-weight="normal" text-anchor="start" textLength="33.3" lengthAdjust="spacingAndGlyphs" stroke="#222222" stroke-width="0.25">mean;</text>
<text x="796.7" y="274.0" font-size="12.3" fill="#222222" font-weight="normal" text-anchor="start" textLength="26.8" lengthAdjust="spacingAndGlyphs" stroke="#222222" stroke-width="0.25">SF#2</text>
<text x="826.5" y="274.0" font-size="12.3" fill="#222222" font-weight="normal" text-anchor="start" textLength="45.9" lengthAdjust="spacingAndGlyphs" stroke="#222222" stroke-width="0.25">std.dev.;</text>
<text x="872.8" y="274.0" font-size="12.3" fill="#222222" font-weight="normal" text-anchor="start" textLength="26.2" lengthAdjust="spacingAndGlyphs" stroke="#222222" stroke-width="0.25">SF#2</text>
<text x="902.0" y="274.0" font-size="12.3" fill="#222222" font-weight="normal" text-anchor="start" textLength="23.8" lengthAdjust="spacingAndGlyphs" stroke="#222222" stroke-width="0.25">sum;</text>
<text x="926.2" y="274.0" font-size="12.3" fill="#222222" font-weight="normal" text-anchor="start" textLength="28.1" lengthAdjust="spacingAndGlyphs" stroke="#222222" stroke-width="0.25">SF#3</text>
<text x="957.3" y="274.0" font-size="12.3" fill="#222222" font-weight="normal" text-anchor="start" textLength="34.4" lengthAdjust="spacingAndGlyphs" stroke="#222222" stroke-width="0.25">name;</text>
<text x="992.1" y="274.0" font-size="12.3" fill="#222222" font-weight="normal" text-anchor="start" textLength="25.6" lengthAdjust="spacingAndGlyphs" stroke="#222222" stroke-width="0.25">SF#3</text>
<text x="1020.7" y="274.0" font-size="12.3" fill="#222222" font-weight="normal" text-anchor="start" textLength="25.0" lengthAdjust="spacingAndGlyphs" stroke="#222222" stroke-width="0.25">valid</text>
<text x="1048.7" y="274.0" font-size="12.3" fill="#222222" font-weight="normal" text-anchor="start" textLength="36.4" lengthAdjust="spacingAndGlyphs" stroke="#222222" stroke-width="0.25">values;</text>
<text x="1085.5" y="274.0" font-size="12.3" fill="#222222" font-weight="normal" text-anchor="start" textLength="26.9" lengthAdjust="spacingAndGlyphs" stroke="#222222" stroke-width="0.25">SF#3</text>
<text x="1115.4" y="274.0" font-size="12.3" fill="#222222" font-weight="normal" text-anchor="start" textLength="34.4" lengthAdjust="spacingAndGlyphs" stroke="#222222" stroke-width="0.25">mean;</text>
<text x="1150.2" y="274.0" font-size="12.3" fill="#222222" font-weight="normal" text-anchor="start" textLength="25.6" lengthAdjust="spacingAndGlyphs" stroke="#222222" stroke-width="0.25">SF#3</text>
<text x="1178.8" y="274.0" font-size="12.3" fill="#222222" font-weight="normal" text-anchor="start" textLength="46.6" lengthAdjust="spacingAndGlyphs" stroke="#222222" stroke-width="0.25">std.dev.;</text>
<text x="1225.8" y="274.0" font-size="12.3" fill="#222222" font-weight="normal" text-anchor="start" textLength="25.6" lengthAdjust="spacingAndGlyphs" stroke="#222222" stroke-width="0.25">SF#3</text>
<text x="1254.4" y="274.0" font-size="12.3" fill="#222222" font-weight="normal" text-anchor="start" textLength="25.5" lengthAdjust="spacingAndGlyphs" stroke="#222222" stroke-width="0.25">sum;</text>
<text x="25.7" y="292.0" font-size="12.3" fill="#222222" font-weight="normal" text-anchor="start" textLength="159.9" lengthAdjust="spacingAndGlyphs" stroke="#222222" stroke-width="0.25">model2-densecloud-19-08-19</text>
<text x="188.6" y="292.0" font-size="12.3" fill="#222222" font-weight="normal" text-anchor="start" textLength="4.0" lengthAdjust="spacingAndGlyphs" stroke="#222222" stroke-width="0.25">-</text>
<text x="198.4" y="292.0" font-size="12.3" fill="#222222" font-weight="normal" text-anchor="start" textLength="60.0" lengthAdjust="spacingAndGlyphs" stroke="#222222" stroke-width="0.25">Cloud.core</text>
<text x="261.4" y="292.0" font-size="12.3" fill="#222222" font-weight="normal" text-anchor="start" textLength="33.2" lengthAdjust="spacingAndGlyphs" stroke="#222222" stroke-width="0.25">points</text>
<text x="297.6" y="292.0" font-size="12.3" fill="#222222" font-weight="normal" text-anchor="start" textLength="69.3" lengthAdjust="spacingAndGlyphs" stroke="#222222" stroke-width="0.25">(subsampled</text>
<text x="369.9" y="292.0" font-size="12.3" fill="#222222" font-weight="normal" text-anchor="start" textLength="12.2" lengthAdjust="spacingAndGlyphs" stroke="#222222" stroke-width="0.25">@</text>
<text x="385.1" y="292.0" font-size="12.3" fill="#222222" font-weight="normal" text-anchor="start" textLength="12.4" lengthAdjust="spacingAndGlyphs" stroke="#222222" stroke-width="0.25">1);</text>
<text x="397.9" y="292.0" font-size="12.3" fill="#222222" font-weight="normal" text-anchor="start" textLength="14.8" lengthAdjust="spacingAndGlyphs" stroke="#222222" stroke-width="0.25">52;</text>
<text x="413.1" y="292.0" font-size="12.3" fill="#222222" font-weight="normal" text-anchor="start" textLength="51.7" lengthAdjust="spacingAndGlyphs" stroke="#222222" stroke-width="0.25">13.2177;</text>
<text x="465.2" y="292.0" font-size="12.3" fill="#222222" font-weight="normal" text-anchor="start" textLength="52.2" lengthAdjust="spacingAndGlyphs" stroke="#222222" stroke-width="0.25">-50.3573;</text>
<text x="517.8" y="292.0" font-size="12.3" fill="#222222" font-weight="normal" text-anchor="start" textLength="46.6" lengthAdjust="spacingAndGlyphs" stroke="#222222" stroke-width="0.25">8.60933;</text>
<text x="564.8" y="292.0" font-size="12.3" fill="#222222" font-weight="normal" text-anchor="start" textLength="80.7" lengthAdjust="spacingAndGlyphs" stroke="#222222" stroke-width="0.25">PointSourceId;</text>
<text x="645.9" y="292.0" font-size="12.3" fill="#222222" font-weight="normal" text-anchor="start" textLength="17.2" lengthAdjust="spacingAndGlyphs" stroke="#222222" stroke-width="0.25">52;</text>
<text x="663.5" y="292.0" font-size="12.3" fill="#222222" font-weight="normal" text-anchor="start" textLength="38.5" lengthAdjust="spacingAndGlyphs" stroke="#222222" stroke-width="0.25">1;0;52;</text>
<text x="702.4" y="292.0" font-size="12.3" fill="#222222" font-weight="normal" text-anchor="start" textLength="100.4" lengthAdjust="spacingAndGlyphs" stroke="#222222" stroke-width="0.25">ScanDirectionFlag;</text>
<text x="803.2" y="292.0" font-size="12.3" fill="#222222" font-weight="normal" text-anchor="start" textLength="17.0" lengthAdjust="spacingAndGlyphs" stroke="#222222" stroke-width="0.25">52;</text>
<text x="820.6" y="292.0" font-size="12.3" fill="#222222" font-weight="normal" text-anchor="start" textLength="38.6" lengthAdjust="spacingAndGlyphs" stroke="#222222" stroke-width="0.25">1;0;52;</text>
<text x="859.6" y="292.0" font-size="12.3" fill="#222222" font-weight="normal" text-anchor="start" textLength="49.8" lengthAdjust="spacingAndGlyphs" stroke="#222222" stroke-width="0.25">Intensity;</text>
<text x="909.8" y="292.0" font-size="12.3" fill="#222222" font-weight="normal" text-anchor="start" textLength="17.2" lengthAdjust="spacingAndGlyphs" stroke="#222222" stroke-width="0.25">52;</text>
<text x="927.4" y="292.0" font-size="12.3" fill="#222222" font-weight="normal" text-anchor="start" textLength="48.1" lengthAdjust="spacingAndGlyphs" stroke="#222222" stroke-width="0.25">23980.1;</text>
<text x="975.9" y="292.0" font-size="12.3" fill="#222222" font-weight="normal" text-anchor="start" textLength="47.3" lengthAdjust="spacingAndGlyphs" stroke="#222222" stroke-width="0.25">12090.7;</text>
<text x="1023.6" y="292.0" font-size="12.3" fill="#222222" font-weight="normal" text-anchor="start" textLength="73.6" lengthAdjust="spacingAndGlyphs" stroke="#222222" stroke-width="0.25">1.24696e+06;</text>
<rect x="323.55" y="331.8" width="60.15" height="18.2" fill="none" stroke="#217346" stroke-width="1.9" />
<rect x="381.4" y="347.8" width="4.6" height="4.6" fill="#217346" stroke="#ffffff" stroke-width="0.9" />
<line x1="22.5" y1="665" x2="1303.5" y2="665" stroke="#c6c6c6" stroke-width="1" />
<line x1="1303.5" y1="260" x2="1303.5" y2="665" stroke="#c6c6c6" stroke-width="1" />
<rect x="1303.5" y="242" width="18.5" height="423" fill="#e6e6e6" />
<rect x="1306.5" y="244.5" width="13" height="13" fill="#ffffff" />
<path d="M1309.5 253 L1313 249 L1316.5 253 Z" fill="#606060" />
<rect x="1306.5" y="258.5" width="13" height="374" fill="#ffffff" stroke="#d0d0d0" stroke-width="0.5" />
<rect x="1306.5" y="632.6" width="13" height="18.7" fill="#dadada" />
<rect x="1306.5" y="651.6" width="13" height="13.3" fill="#ffffff" />
<path d="M1309.5 656 L1313 660 L1316.5 656 Z" fill="#606060" />
<rect x="0" y="665" width="1322" height="21" fill="#e6e6e6" />
<line x1="0" y1="665.5" x2="1322" y2="665.5" stroke="#c6c6c6" stroke-width="1" />
<path d="M22.7 672 L18.5 675.5 L22.7 679 Z" fill="#b0b0b0" />
<path d="M39.5 672 L43.7 675.5 L39.5 679 Z" fill="#b0b0b0" />
<rect x="74.8" y="665" width="202.5" height="20" fill="#ffffff" stroke="#c6c6c6" stroke-width="1" />
<rect x="74.8" y="682.5" width="202.5" height="2" fill="#217346" />
<text x="84.0" y="678.3" font-size="12.3" fill="#217346" font-weight="bold" text-anchor="start" textLength="184.6" lengthAdjust="spacingAndGlyphs" >model2_classificationwithtest4</text>
<circle cx="310.2" cy="675.8" r="7" fill="none" stroke="#666" stroke-width="1.1"/>
<path d="M306 675.8 H314.4 M310.2 671.6 V680" fill="none" stroke="#666" stroke-width="1.1" />
<rect x="791.5" y="671" width="1.5" height="1.5" fill="#999" />
<rect x="791.5" y="675" width="1.5" height="1.5" fill="#999" />
<rect x="791.5" y="679" width="1.5" height="1.5" fill="#999" />
<rect x="803" y="668.6" width="13.5" height="13.6" fill="#ffffff" />
<path d="M813 671.5 L809 675.4 L813 679.3 Z" fill="#606060" />
<rect x="816.5" y="668.6" width="450" height="13.6" fill="#ffffff" stroke="#c6c6c6" stroke-width="0.6" />
<rect x="1266.4" y="668.6" width="22.6" height="13.6" fill="#dadada" />
<rect x="1291.4" y="668.6" width="13" height="13.6" fill="#ffffff" />
<path d="M1295.5 671.5 L1299.5 675.4 L1295.5 679.3 Z" fill="#606060" />
<rect x="0" y="686" width="1322" height="8" fill="#f3f2f1" />
<rect x="0" y="682.2" width="1322" height="4.3" fill="#e6e6e6" />
<rect x="959" y="690.2" width="14" height="6" fill="#444444" rx="1" />
<text x="975.5" y="700.5" font-size="11.5" fill="#555555" font-weight="normal" text-anchor="start" textLength="62.0" lengthAdjust="spacingAndGlyphs" >Display Settings</text>
<rect x="1059.7" y="686.8" width="31.1" height="8" fill="#c8c6c4" />
<path d="M1069.5 695 V691.5 H1081 V695 M1073.3 691.5 V695 M1077.2 691.5 V695" fill="none" stroke="#505050" stroke-width="1" />
<path d="M1100.5 695 V691.5 H1112.5 V695 M1102.8 693.5 H1110.2" fill="none" stroke="#666" stroke-width="1" />
<path d="M1131.8 695 V691.5 H1144.3 V695 M1136 691.5 V695 M1140 691.5 V695" fill="none" stroke="#666" stroke-width="1" />
<rect x="1213.8" y="689.8" width="4.7" height="6" fill="#555555" />
<text x="1264.0" y="700.0" font-size="11" fill="#555" font-weight="normal" text-anchor="start" >+</text>
<text x="1279.0" y="700.5" font-size="11" fill="#555555" font-weight="normal" text-anchor="start" textLength="22.0" lengthAdjust="spacingAndGlyphs" >100%</text>
<path d="M14.3 96.8 H32.2 V117.7 H14.3 Z" fill="#fafafa" stroke="#f0a030" stroke-width="1.5" />
<path d="M17.8 99 V96.2 H21.3 Q21.5 92.3 23.3 92.3 Q25.1 92.3 25.3 96.2 H28.8 V99 Z" fill="#f5f5f5" stroke="#5f5f5f" stroke-width="1.1" />
<path d="M26 104.3 H38 V119.8 H26 Z" fill="#fafafa" stroke="#5f5f5f" stroke-width="1.3" stroke-linejoin="round"/>
<text x="11.2" y="133.8" font-size="12.2" fill="#484848" text-anchor="start" font-weight="normal" textLength="24.6" lengthAdjust="spacingAndGlyphs" >Paste</text>
<path d="M20.50 142.80 L23.20 145.60 L25.90 142.80" fill="none" stroke="#5f5f5f" stroke-width="1.1" />
<path d="M50.5 93.5 L55.5 104.2 M55.5 93.5 L50.5 104.2" fill="none" stroke="#5f5f5f" stroke-width="1.0" />
<circle cx="50.2" cy="106" r="1.8" fill="#2b88d8"/><circle cx="55.8" cy="106" r="1.8" fill="#2b88d8"/>
<path d="M51.8 114.9 H45.6 V127.3 H50.8" fill="none" stroke="#5f5f5f" stroke-width="1.1" />
<path d="M51 117.5 H57.3 L60.3 120.5 V129.3 H51 Z M57.3 117.5 V120.5 H60.3" fill="#fafafa" stroke="#5f5f5f" stroke-width="1.1" />
<path d="M53.5 123.5 H58 M53.5 125.6 H58" fill="none" stroke="#5f5f5f" stroke-width="0.8" />
<path d="M66.30 120.90 L69.00 123.90 L71.70 120.90" fill="none" stroke="#5f5f5f" stroke-width="1.1" />
<path d="M46.2 143 L51.6 140.2 L57 145.2 L52.2 149.6 Z" fill="#ffffff" stroke="#f08a24" stroke-width="1.3" stroke-linejoin="round"/>
<path d="M47.5 144.2 L55.5 146.3 L52.2 149.4 Z" fill="#f5a54a" />
<path d="M51.6 140 L53.4 138.4 L55.2 140.1 L58.7 136.4 L60.2 137.9 L56.8 141.6 L58.4 143.6 L57 145.2 Z" fill="#ffffff" stroke="#505050" stroke-width="1.2" stroke-linejoin="round"/>
<rect x="92.5" y="97.5" width="108.5" height="20.5" fill="#ffffff" stroke="#c8c6c4" stroke-width="1"/>
<rect x="201" y="97.5" width="45.5" height="20.5" fill="#ffffff" stroke="#c8c6c4" stroke-width="1"/>
<text x="94.5" y="112.3" font-size="12" fill="#444444" text-anchor="start" font-weight="normal" textLength="31.9" lengthAdjust="spacingAndGlyphs" >Calibri</text>
<path d="M192.40 106.80 L195.20 109.80 L198.00 106.80" fill="none" stroke="#5f5f5f" stroke-width="1.1" />
<text x="204.2" y="112.3" font-size="12" fill="#444444" text-anchor="start" font-weight="normal" textLength="10.8" lengthAdjust="spacingAndGlyphs" >11</text>
<path d="M238.10 106.80 L240.90 109.80 L243.70 106.80" fill="none" stroke="#5f5f5f" stroke-width="1.1" />
<text x="252.9" y="112.0" font-size="13.2" fill="#505050" text-anchor="start" font-weight="normal" textLength="8.0" lengthAdjust="spacingAndGlyphs" >A</text>
<path d="M260.2 103.3 L262.7 100.5 L265.2 103.3" fill="none" stroke="#2b88d8" stroke-width="1.4" />
<text x="273.9" y="112.0" font-size="13.2" fill="#505050" text-anchor="start" font-weight="normal" textLength="8.0" lengthAdjust="spacingAndGlyphs" >A</text>
<path d="M281.2 100.5 L283.7 103.3 L286.2 100.5" fill="none" stroke="#2b88d8" stroke-width="1.4" />
<text x="99.2" y="141.2" font-size="13.5" fill="#3c3c3c" text-anchor="start" font-weight="bold" textLength="7.0" lengthAdjust="spacingAndGlyphs" >B</text>
<text x="120.2" y="141.2" font-size="13.5" fill="#505050" text-anchor="start" font-weight="normal" textLength="6.0" lengthAdjust="spacingAndGlyphs" font-family="Liberation Serif" font-style="italic">I</text>
<text x="140.4" y="140.3" font-size="12.8" fill="#505050" text-anchor="start" font-weight="normal" textLength="8.0" lengthAdjust="spacingAndGlyphs" >U</text>
<rect x="140.2" y="141.8" width="8.2" height="1.2" fill="#505050"/>
<path d="M158.40 136.00 L161.40 139.20 L164.40 136.00" fill="none" stroke="#5f5f5f" stroke-width="1.1" />
<line x1="172.8" y1="128.6" x2="172.8" y2="146.7" stroke="#d6d4d2" stroke-width="1"/>
<path d="M179.6 130 H193 V142 H179.6 Z M186.3 130 V142 M179.6 136 H193" fill="none" stroke="#9a9a9a" stroke-width="0.9" stroke-dasharray="1.3 0.9"/>
<rect x="179.3" y="142.5" width="14" height="1.4" fill="#707070"/>
<path d="M200.80 135.65 L203.60 138.75 L206.40 135.65" fill="none" stroke="#5f5f5f" stroke-width="1.1" />
<line x1="214.6" y1="128.6" x2="214.6" y2="146.7" stroke="#d6d4d2" stroke-width="1"/>
<path d="M224.2 134.5 L229.5 129.8 L232.6 135.5 L227.5 140.2 Z" fill="#fafafa" stroke="#3c3c3c" stroke-width="1.1" stroke-linejoin="round"/>
<path d="M233 133 Q235.4 135.5 234.8 138.8 Q233 138.5 233.2 135.5 Z" fill="#1e73be" />
<rect x="221" y="141" width="15.3" height="3.7" fill="#ffff00"/>
<path d="M242.90 135.65 L245.70 138.75 L248.50 135.65" fill="none" stroke="#5f5f5f" stroke-width="1.1" />
<text x="259.5" y="139.6" font-size="13" fill="#404040" text-anchor="start" font-weight="normal" textLength="9.2" lengthAdjust="spacingAndGlyphs" >A</text>
<rect x="256.7" y="141.3" width="15" height="3.4" fill="#ff0000"/>
<path d="M278.20 135.65 L281.00 138.75 L283.80 135.65" fill="none" stroke="#5f5f5f" stroke-width="1.1" />
<rect x="307.90" y="99.25" width="13.20" height="1.3" fill="#5f5f5f"/>
<rect x="310.00" y="103.05" width="9.00" height="1.3" fill="#5f5f5f"/>
<rect x="307.90" y="106.85" width="13.20" height="1.3" fill="#5f5f5f"/>
<rect x="329.10" y="102.05" width="12.90" height="1.3" fill="#5f5f5f"/>
<rect x="331.10" y="105.85" width="9.00" height="1.3" fill="#5f5f5f"/>
<rect x="329.10" y="109.55" width="12.90" height="1.3" fill="#5f5f5f"/>
<rect x="346.2" y="97.2" width="20.7" height="20.1" fill="#c8c6c4"/>
<rect x="350.20" y="105.85" width="12.90" height="1.3" fill="#5f5f5f"/>
<rect x="352.00" y="109.55" width="9.20" height="1.3" fill="#5f5f5f"/>
<rect x="350.20" y="113.35" width="12.90" height="1.3" fill="#5f5f5f"/>
<line x1="370.5" y1="98.3" x2="370.5" y2="116.7" stroke="#d6d4d2" stroke-width="1"/>
<text x="0" y="0" font-size="10.5" fill="#5f5f5f" transform="translate(378.3 109.6) rotate(-45)" textLength="11.5" lengthAdjust="spacingAndGlyphs">ab</text>
<path d="M382.5 113.3 L391.8 103.5 M387.3 103.8 H391.8 V108.3" fill="none" stroke="#2b88d8" stroke-width="1.2" />
<path d="M395.80 105.90 L398.50 108.70 L401.20 105.90" fill="none" stroke="#5f5f5f" stroke-width="1.1" />
<rect x="307.90" y="129.65" width="13.20" height="1.3" fill="#5f5f5f"/>
<rect x="307.90" y="133.45" width="9.20" height="1.3" fill="#5f5f5f"/>
<rect x="307.90" y="137.15" width="13.20" height="1.3" fill="#5f5f5f"/>
<rect x="307.90" y="140.95" width="9.20" height="1.3" fill="#5f5f5f"/>
<rect x="329.10" y="129.65" width="12.90" height="1.3" fill="#5f5f5f"/>
<rect x="331.10" y="133.45" width="9.00" height="1.3" fill="#5f5f5f"/>
<rect x="329.10" y="137.15" width="12.90" height="1.3" fill="#5f5f5f"/>
<rect x="331.10" y="140.95" width="9.00" height="1.3" fill="#5f5f5f"/>
<rect x="350.20" y="129.65" width="12.90" height="1.3" fill="#5f5f5f"/>
<rect x="353.90" y="133.45" width="9.20" height="1.3" fill="#5f5f5f"/>
<rect x="350.20" y="137.15" width="12.90" height="1.3" fill="#5f5f5f"/>
<rect x="353.90" y="140.95" width="9.20" height="1.3" fill="#5f5f5f"/>
<line x1="370.5" y1="127.5" x2="370.5" y2="145.5" stroke="#d6d4d2" stroke-width="1"/>
<rect x="377.90" y="129.65" width="13.10" height="1.3" fill="#5f5f5f"/>
<rect x="385.70" y="133.45" width="5.30" height="1.3" fill="#5f5f5f"/>
<rect x="385.70" y="137.15" width="5.30" height="1.3" fill="#5f5f5f"/>
<rect x="377.90" y="140.95" width="13.10" height="1.3" fill="#5f5f5f"/>
<path d="M383.8 136 H378.5 M381 133.3 L378.3 136 L381 138.7" fill="none" stroke="#2b88d8" stroke-width="1.3" />
<rect x="398.70" y="129.65" width="13.30" height="1.3" fill="#5f5f5f"/>
<rect x="406.50" y="133.45" width="5.50" height="1.3" fill="#5f5f5f"/>
<rect x="406.50" y="137.15" width="5.50" height="1.3" fill="#5f5f5f"/>
<rect x="398.70" y="140.95" width="13.30" height="1.3" fill="#5f5f5f"/>
<path d="M398.9 136 H404.3 M401.8 133.3 L404.5 136 L401.8 138.7" fill="none" stroke="#2b88d8" stroke-width="1.3" />
<line x1="419.3" y1="93.8" x2="419.3" y2="150" stroke="#d6d4d2" stroke-width="1"/>
<text x="427.9" y="106.9" font-size="8.6" fill="#5f5f5f" text-anchor="start" font-weight="normal" textLength="11.4" lengthAdjust="spacingAndGlyphs" >ab</text>
<text x="427.9" y="113.4" font-size="8.6" fill="#5f5f5f" text-anchor="start" font-weight="normal" textLength="5.2" lengthAdjust="spacingAndGlyphs" >c</text>
<path d="M439.3 107.6 Q440.2 112 434.8 111.5 M436.8 109.3 L434.5 111.5 L436.8 113.6" fill="none" stroke="#2b88d8" stroke-width="1.2" />
<text x="443.6" y="112.2" font-size="12.2" fill="#484848" text-anchor="start" font-weight="normal" textLength="49.6" lengthAdjust="spacingAndGlyphs" >Wrap Text</text>
<rect x="426.5" y="129.5" width="13" height="13.3" fill="none" stroke="#5f5f5f" stroke-width="1.1"/>
<rect x="427.6" y="131.3" width="10.8" height="9.8" fill="#ffffff" stroke="#2b88d8" stroke-width="1.3"/>
<path d="M429.5 136.2 H436.5 M431.5 134.3 L429.5 136.2 L431.5 138.1 M434.5 134.3 L436.5 136.2 L434.5 138.1" fill="none" stroke="#2b88d8" stroke-width="1.1" />
<path d="M433 129.5 V131 M433 141.2 V142.8" fill="none" stroke="#5f5f5f" stroke-width="1" />
<text x="443.6" y="141.4" font-size="12.2" fill="#484848" text-anchor="start" font-weight="normal" textLength="78.8" lengthAdjust="spacingAndGlyphs" >Merge &amp; Center</text>
<path d="M531.70 134.80 L534.50 137.80 L537.30 134.80" fill="none" stroke="#5f5f5f" stroke-width="1.1" />
<rect x="557.5" y="97.5" width="126" height="20.5" fill="#ffffff" stroke="#c8c6c4" stroke-width="1"/>
<text x="559.8" y="112.4" font-size="12" fill="#444444" text-anchor="start" font-weight="normal" textLength="37.7" lengthAdjust="spacingAndGlyphs" >General</text>
<path d="M675.10 106.80 L677.90 109.80 L680.70 106.80" fill="none" stroke="#5f5f5f" stroke-width="1.1" />
<path d="M567.4 130.6 V144.4 M570.6 134.5 Q569.8 132.3 567.3 132.3 Q564.2 132.3 564.2 135 Q564.2 137 567.3 137.6 Q570.8 138.3 570.8 140.8 Q570.8 143.1 567.3 143.1 Q564.4 143.1 563.8 140.8" fill="none" stroke="#505050" stroke-width="1.3" />
<path d="M582.00 135.80 L584.80 138.80 L587.60 135.80" fill="none" stroke="#5f5f5f" stroke-width="1.1" />
<ellipse cx="599.3" cy="134.4" rx="2.6" ry="2.9" fill="none" stroke="#505050" stroke-width="1.3"/><ellipse cx="607.1" cy="140" rx="2.6" ry="2.9" fill="none" stroke="#505050" stroke-width="1.3"/>
<path d="M607.6 131 L598.3 143.6" fill="none" stroke="#505050" stroke-width="1.3" />
<path d="M624.8 133.2 Q629.2 133.2 628.8 137.5 Q628.2 141.5 622 143.2 Q625.5 140.6 625.3 139 Q621.5 138.8 621.5 136.2 Q621.8 133.2 624.8 133.2 Z" fill="#3c3c3c" />
<line x1="637.9" y1="128.5" x2="637.9" y2="146.6" stroke="#d6d4d2" stroke-width="1"/>
<path d="M653 134 H645.3 M647.8 131.5 L645.3 134 L647.8 136.5" fill="none" stroke="#2b88d8" stroke-width="1.3" />
<text x="654.0" y="137.3" font-size="8.5" fill="#707070" text-anchor="start" font-weight="normal" textLength="4.8" lengthAdjust="spacingAndGlyphs" >0</text>
<text x="646.5" y="144.2" font-size="8.5" fill="#707070" text-anchor="start" font-weight="normal" textLength="11.8" lengthAdjust="spacingAndGlyphs" >.00</text>
<text x="667.8" y="136.4" font-size="8.5" fill="#707070" text-anchor="start" font-weight="normal" textLength="11.8" lengthAdjust="spacingAndGlyphs" >.00</text>
<path d="M665.6 140.3 H673.8 M671.3 137.8 L673.8 140.3 L671.3 142.8" fill="none" stroke="#2b88d8" stroke-width="1.3" />
<text x="673.5" y="144.2" font-size="8.5" fill="#707070" text-anchor="start" font-weight="normal" textLength="6.2" lengthAdjust="spacingAndGlyphs" >.0</text>
<rect x="720.5" y="95.5" width="25.799999999999955" height="20.299999999999997" fill="#ffffff" stroke="#5f5f5f" stroke-width="1.1" rx="0.8"/>
<line x1="724.6" y1="95.5" x2="724.6" y2="115.8" stroke="#5f5f5f" stroke-width="1.1"/>
<line x1="737.6" y1="95.5" x2="737.6" y2="115.8" stroke="#5f5f5f" stroke-width="1.1"/>
<line x1="741.8" y1="95.5" x2="741.8" y2="115.8" stroke="#5f5f5f" stroke-width="1.1"/>
<line x1="720.5" y1="102.5" x2="746.3" y2="102.5" stroke="#5f5f5f" stroke-width="1.1"/>
<line x1="720.5" y1="108.7" x2="746.3" y2="108.7" stroke="#5f5f5f" stroke-width="1.1"/>
<rect x="724.8" y="95.8" width="12.3" height="6.7" fill="#f7a1aa" stroke="#e0434c" stroke-width="1"/>
<rect x="724.8" y="102.6" width="8.2" height="6" fill="#8bc0ee" stroke="#1e64b4" stroke-width="1"/>
<rect x="724.8" y="108.8" width="14.2" height="6.8" fill="#f7a1aa" stroke="#e0434c" stroke-width="1"/>
<text x="703.9" y="134.7" font-size="12.2" fill="#484848" text-anchor="start" font-weight="normal" textLength="57.4" lengthAdjust="spacingAndGlyphs" >Conditional</text>
<text x="700.8" y="148.6" font-size="12.2" fill="#484848" text-anchor="start" font-weight="normal" textLength="53.5" lengthAdjust="spacingAndGlyphs" >Formatting</text>
<path d="M758.80 143.80 L761.50 146.60 L764.20 143.80" fill="none" stroke="#5f5f5f" stroke-width="1.1" />
<rect x="781.3" y="95.5" width="26.0" height="20.299999999999997" fill="#ffffff" stroke="#5f5f5f" stroke-width="1.1" rx="0.8"/>
<line x1="789.3" y1="95.5" x2="789.3" y2="115.8" stroke="#5f5f5f" stroke-width="1.1"/>
<line x1="798.4" y1="95.5" x2="798.4" y2="115.8" stroke="#5f5f5f" stroke-width="1.1"/>
<line x1="781.3" y1="102.5" x2="807.3" y2="102.5" stroke="#5f5f5f" stroke-width="1.1"/>
<line x1="781.3" y1="108.7" x2="807.3" y2="108.7" stroke="#5f5f5f" stroke-width="1.1"/>
<rect x="789.6" y="102.8" width="17.4" height="12.8" fill="#8bc0ee" stroke="#1e73be" stroke-width="1.2"/>
<path d="M789.3 108.7 H807.3 M798.4 102.5 V115.8" fill="none" stroke="#1e73be" stroke-width="1" />
<path d="M808.3 102.6 L796.5 113.8" fill="none" stroke="#5f5f5f" stroke-width="2.6" stroke-linecap="round"/>
<path d="M808.3 102.6 L796.5 113.8" fill="none" stroke="#ffffff" stroke-width="1.0" stroke-linecap="round"/>
<path d="M796.8 112.8 Q792.5 112.5 792.3 117 Q791.5 118.5 790.8 118.6 Q797 119.6 798.3 114.6 Z" fill="#5ba4e5" stroke="#1e73be" stroke-width="0.9" />
<text x="769.5" y="134.7" font-size="12.2" fill="#484848" text-anchor="start" font-weight="normal" textLength="48.5" lengthAdjust="spacingAndGlyphs" >Format as</text>
<text x="775.7" y="148.6" font-size="12.2" fill="#484848" text-anchor="start" font-weight="normal" textLength="28.0" lengthAdjust="spacingAndGlyphs" >Table</text>
<path d="M805.50 143.80 L808.20 146.60 L810.90 143.80" fill="none" stroke="#5f5f5f" stroke-width="1.1" />
<rect x="828.3" y="95.5" width="26.200000000000045" height="20.299999999999997" fill="#ffffff" stroke="#5f5f5f" stroke-width="1.1" rx="0.8"/>
<rect x="833.3" y="100" width="16.8" height="10.5" fill="#8bc0ee" stroke="#1e73be" stroke-width="1.2"/>
<path d="M828.3 100 H854.5 M833.3 95.5 V115.8 M828.3 110.5 H833.3" fill="none" stroke="#5f5f5f" stroke-width="1" />
<path d="M855.3 102.6 L843.5 113.8" fill="none" stroke="#5f5f5f" stroke-width="2.6" stroke-linecap="round"/>
<path d="M855.3 102.6 L843.5 113.8" fill="none" stroke="#ffffff" stroke-width="1.0" stroke-linecap="round"/>
<path d="M843.8 112.8 Q839.5 112.5 839.3 117 Q838.5 118.5 837.8 118.6 Q844 119.6 845.3 114.6 Z" fill="#5ba4e5" stroke="#1e73be" stroke-width="0.9" />
<text x="832.4" y="134.7" font-size="12.2" fill="#484848" text-anchor="start" font-weight="normal" textLength="18.4" lengthAdjust="spacingAndGlyphs" >Cell</text>
<text x="821.6" y="148.6" font-size="12.2" fill="#484848" text-anchor="start" font-weight="normal" textLength="31.5" lengthAdjust="spacingAndGlyphs" >Styles</text>
<path d="M854.80 143.80 L857.50 146.60 L860.20 143.80" fill="none" stroke="#5f5f5f" stroke-width="1.1" />
<rect x="884.4" y="95.6" width="25.5" height="19.80000000000001" fill="#ffffff" stroke="#5f5f5f" stroke-width="1.1" rx="0.8"/>
<line x1="892.6" y1="95.6" x2="892.6" y2="115.4" stroke="#8a8a8a" stroke-width="1.1"/>
<line x1="901.6" y1="95.6" x2="901.6" y2="115.4" stroke="#8a8a8a" stroke-width="1.1"/>
<line x1="884.4" y1="101.7" x2="909.9" y2="101.7" stroke="#8a8a8a" stroke-width="1.1"/>
<line x1="884.4" y1="108.4" x2="909.9" y2="108.4" stroke="#8a8a8a" stroke-width="1.1"/>
<rect x="888.8" y="101.9" width="22.8" height="6.3" fill="#8bc0ee" stroke="#1e73be" stroke-width="1.1" rx="0.6"/>
<path d="M888.8 103 V99.2 L882.6 105.1 L888.8 111 V107.2" fill="#d6e9fa" stroke="#2b88d8" stroke-width="1.1" stroke-linejoin="round"/>
<text x="883.4" y="134.7" font-size="12.2" fill="#484848" text-anchor="start" font-weight="normal" textLength="26.8" lengthAdjust="spacingAndGlyphs" >Insert</text>
<path d="M893.70 142.80 L896.40 145.60 L899.10 142.80" fill="none" stroke="#5f5f5f" stroke-width="1.1" />
<rect x="921.6" y="95.6" width="26.0" height="19.80000000000001" fill="#ffffff" stroke="#5f5f5f" stroke-width="1.1" rx="0.8"/>
<line x1="930.2" y1="95.6" x2="930.2" y2="115.4" stroke="#8a8a8a" stroke-width="1.1"/>
<line x1="938.8" y1="95.6" x2="938.8" y2="115.4" stroke="#8a8a8a" stroke-width="1.1"/>
<line x1="921.6" y1="101.7" x2="947.6" y2="101.7" stroke="#8a8a8a" stroke-width="1.1"/>
<line x1="921.6" y1="108.4" x2="947.6" y2="108.4" stroke="#8a8a8a" stroke-width="1.1"/>
<rect x="925" y="101.9" width="13.8" height="6.3" fill="#8bc0ee" stroke="#1e73be" stroke-width="1.1"/>
<path d="M938 100.8 L949.2 111.6 M949.2 100.8 L938 111.6" fill="none" stroke="#e8464e" stroke-width="1.2" />
<text x="918.6" y="134.7" font-size="12.2" fill="#484848" text-anchor="start" font-weight="normal" textLength="32.3" lengthAdjust="spacingAndGlyphs" >Delete</text>
<path d="M931.50 142.80 L934.20 145.60 L936.90 142.80" fill="none" stroke="#5f5f5f" stroke-width="1.1" />
<rect x="960.2" y="95.6" width="25.59999999999991" height="19.80000000000001" fill="#ffffff" stroke="#5f5f5f" stroke-width="1.1" rx="0.8"/>
<line x1="967.1" y1="95.6" x2="967.1" y2="115.4" stroke="#8a8a8a" stroke-width="1.1"/>
<line x1="979.2" y1="95.6" x2="979.2" y2="115.4" stroke="#8a8a8a" stroke-width="1.1"/>
<line x1="960.2" y1="101.7" x2="985.8" y2="101.7" stroke="#8a8a8a" stroke-width="1.1"/>
<line x1="960.2" y1="108.4" x2="985.8" y2="108.4" stroke="#8a8a8a" stroke-width="1.1"/>
<rect x="967.3" y="101.9" width="11.7" height="6.3" fill="#8bc0ee" stroke="#1e73be" stroke-width="1.1"/>
<path d="M965.8 92.1 H980.6 M965.8 90.6 V93.6 M980.6 90.6 V93.6" fill="none" stroke="#2b88d8" stroke-width="1.1" />
<text x="955.2" y="134.7" font-size="12.2" fill="#484848" text-anchor="start" font-weight="normal" textLength="34.7" lengthAdjust="spacingAndGlyphs" >Format</text>
<path d="M970.30 142.80 L973.00 145.60 L975.70 142.80" fill="none" stroke="#5f5f5f" stroke-width="1.1" />
<path d="M1024.2 93.5 V91.8 H1012.6 L1018.8 98.2 L1012.6 104.6 H1024.2 V102.9" fill="none" stroke="#5f5f5f" stroke-width="1.2" />
<text x="1028.1" y="102.8" font-size="12" fill="#484848" text-anchor="start" font-weight="normal" textLength="45.2" lengthAdjust="spacingAndGlyphs" >AutoSum</text>
<path d="M1082.80 97.20 L1085.50 100.00 L1088.20 97.20" fill="none" stroke="#5f5f5f" stroke-width="1.1" />
<rect x="1011.2" y="112.3" width="13.8" height="11.8" fill="#ffffff" stroke="#5f5f5f" stroke-width="1.1"/>
<rect x="1011.2" y="112.3" width="13.8" height="2" fill="#5f5f5f"/>
<path d="M1018 115.5 V121.5 M1015.3 118.8 L1018 121.5 L1020.7 118.8" fill="none" stroke="#2b88d8" stroke-width="1.1" />
<text x="1028.1" y="122.4" font-size="12" fill="#484848" text-anchor="start" font-weight="normal" textLength="13.3" lengthAdjust="spacingAndGlyphs" >Fill</text>
<path d="M1045.90 116.50 L1048.50 119.30 L1051.10 116.50" fill="none" stroke="#5f5f5f" stroke-width="1.1" />
<path d="M1018.1 132.3 L1025 139 L1017.8 145.5 L1011.2 139 Z" fill="#ffffff" stroke="#b146c2" stroke-width="1.3" stroke-linejoin="round"/>
<path d="M1011.2 139 L1014.6 135.8 L1021.2 142.2 L1017.8 145.5 Z" fill="#d59ee0" stroke="#b146c2" stroke-width="1.1" />
<text x="1028.1" y="142.7" font-size="12" fill="#484848" text-anchor="start" font-weight="normal" textLength="24.9" lengthAdjust="spacingAndGlyphs" >Clear</text>
<path d="M1057.60 137.90 L1060.20 140.70 L1062.80 137.90" fill="none" stroke="#5f5f5f" stroke-width="1.1" />
<text x="1099.9" y="104.6" font-size="16" fill="#2b88d8" text-anchor="start" font-weight="normal" textLength="9.2" lengthAdjust="spacingAndGlyphs" >A</text>
<text x="1100.2" y="117.4" font-size="16" fill="#5f5f5f" text-anchor="start" font-weight="normal" textLength="8.3" lengthAdjust="spacingAndGlyphs" >Z</text>
<path d="M1111.3 99.7 H1125.7 L1120.2 106.4 V113.5 H1116.8 V106.4 Z" fill="#fafafa" stroke="#5f5f5f" stroke-width="1.1" stroke-linejoin="round"/>
<text x="1096.8" y="134.2" font-size="12.2" fill="#484848" text-anchor="start" font-weight="normal" textLength="31.4" lengthAdjust="spacingAndGlyphs" >Sort &amp;</text>
<text x="1095.2" y="148.8" font-size="12.2" fill="#484848" text-anchor="start" font-weight="normal" textLength="24.1" lengthAdjust="spacingAndGlyphs" >Filter</text>
<path d="M1123.80 144.00 L1126.30 146.60 L1128.80 144.00" fill="none" stroke="#5f5f5f" stroke-width="1.1" />
<circle cx="1157.5" cy="101.7" r="9.3" fill="#fafafa" stroke="#5f5f5f" stroke-width="1.1"/>
<path d="M1150.8 108.5 L1140.5 119.2" fill="none" stroke="#5f5f5f" stroke-width="1.2" />
<text x="1137.6" y="134.2" font-size="12.2" fill="#484848" text-anchor="start" font-weight="normal" textLength="33.0" lengthAdjust="spacingAndGlyphs" >Find &amp;</text>
<text x="1134.0" y="148.8" font-size="12.2" fill="#484848" text-anchor="start" font-weight="normal" textLength="30.3" lengthAdjust="spacingAndGlyphs" >Select</text>
<path d="M1168.10 144.00 L1170.60 146.60 L1173.10 144.00" fill="none" stroke="#5f5f5f" stroke-width="1.1" />
<path d="M1206.2 92.8 H1218.8 L1213.3 103.8 H1220.7 L1202.8 118.5 L1207.5 108 H1200.7 Z" fill="#82bbef" stroke="#1e73be" stroke-width="1.1" stroke-linejoin="round"/>
<text x="1197.3" y="134.2" font-size="12.2" fill="#484848" text-anchor="start" font-weight="normal" textLength="25.9" lengthAdjust="spacingAndGlyphs" >Ideas</text>
</svg>
</body></html>
